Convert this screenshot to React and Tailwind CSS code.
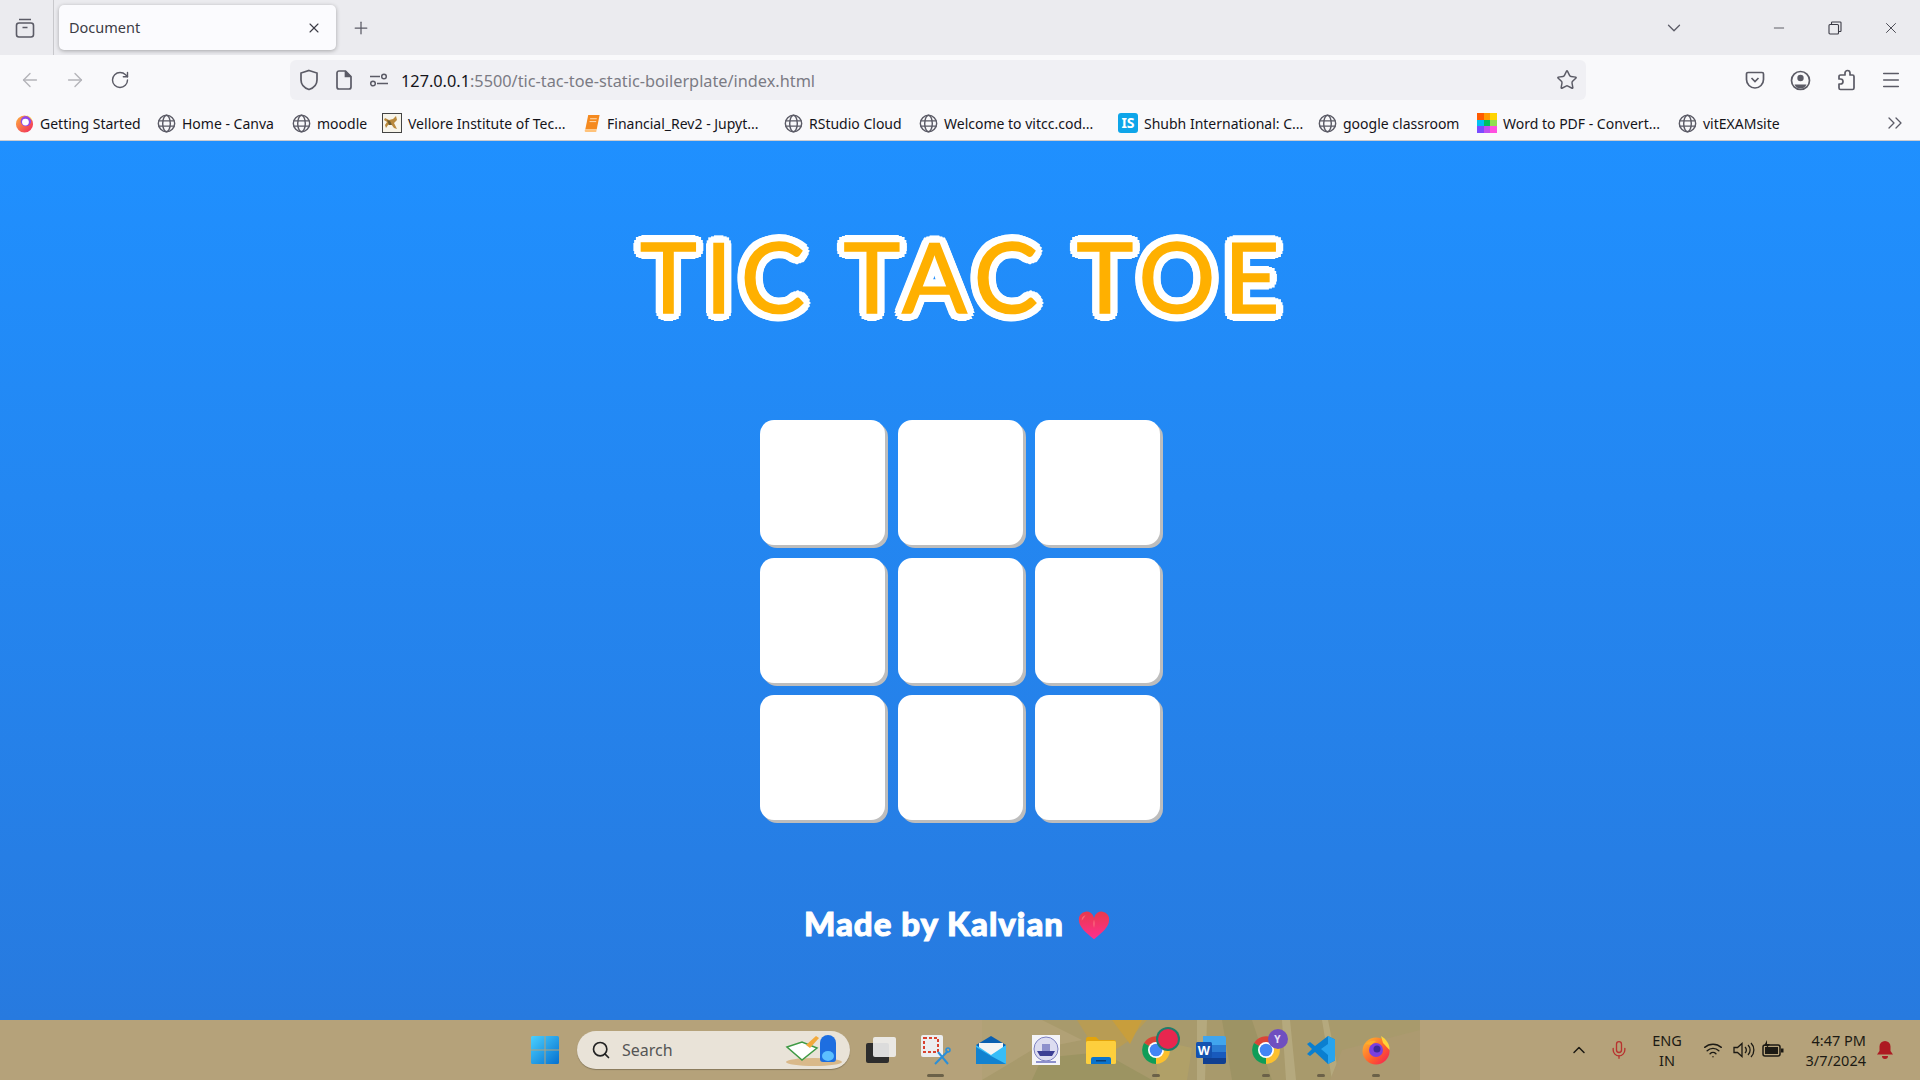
import { ArrowLeft, ArrowRight, RotateCw, X, Plus, ChevronDown, Minus, Star, Menu, ChevronsRight, ChevronUp, Mic, Wifi, Search } from 'lucide-react';

const Globe = () => (
  <svg width="19" height="19" viewBox="0 0 20 20" fill="none" stroke="#5b5b66" strokeWidth="1.5" className="shrink-0">
    <circle cx="10" cy="10" r="8.6" />
    <ellipse cx="10" cy="10" rx="4" ry="8.6" />
    <path d="M1.5 7.2h17M1.5 12.8h17" />
  </svg>
);

const FirefoxDot = () => (
  <svg width="19" height="19" viewBox="0 0 20 20" className="shrink-0">
    <defs>
      <linearGradient id="ffdot" x1="0" y1="0" x2="1" y2="1">
        <stop offset="0" stopColor="#ffb43a" />
        <stop offset="1" stopColor="#f0245f" />
      </linearGradient>
    </defs>
    <circle cx="10" cy="10.5" r="9" fill="url(#ffdot)" />
    <circle cx="11.5" cy="7.5" r="5.5" fill="#8f4ae8" />
    <circle cx="11" cy="8.5" r="3.6" fill="#fff" />
    <path d="M12 1.2c3 .6 5.6 3 6.5 6-2-2.8-4-4.2-6.5-6z" fill="#ffd23f" />
  </svg>
);

const TomcatIcon = () => (
  <svg width="20" height="20" viewBox="0 0 20 20" className="shrink-0">
    <rect x=".5" y=".5" width="19" height="19" fill="#f7f4ea" stroke="#444" />
    <path d="M3 5l4 2 4-1 3-3 1 4-3 3 3 6-3-1-3-4-3 1-2 3-1-3 2-3-3-2z" fill="#b9893c" />
    <path d="M5 7l3 1 2 4-3 0z" fill="#6d5a2c" />
  </svg>
);

const BookIcon = () => (
  <svg width="18" height="19" viewBox="0 0 18 20" className="shrink-0">
    <path d="M5 1h12l-3 15H2z" fill="#f58a1f" />
    <path d="M2 16h12l-.6 3H2.4C1 19 1 16.5 2 16z" fill="#ffc27a" />
    <path d="M7 5h7M6.4 8h7" stroke="#ffe0b8" strokeWidth="1" />
  </svg>
);

const IsIcon = () => (
  <span className="flex h-5 w-5 shrink-0 items-center justify-center rounded-[3px] bg-[#0ea5e9] text-[14px] font-bold leading-none text-white">IS</span>
);

const WordPdfIcon = () => (
  <div className="grid h-5 w-5 shrink-0 grid-cols-3 grid-rows-3">
    <span className="bg-[#ff5a00]" /><span className="bg-[#ff9a00]" /><span className="bg-[#ffd400]" />
    <span className="bg-[#00c0f0]" /><span className="bg-[#00c060]" /><span className="bg-[#90e050]" />
    <span className="bg-[#7a4cff]" /><span className="bg-[#c050f0]" /><span className="bg-[#ff50e0]" />
  </div>
);

const bookmarks = [
  { label: 'Getting Started', icon: <FirefoxDot />, width: 'w-[142px]' },
  { label: 'Home - Canva', icon: <Globe />, width: 'w-[135px]' },
  { label: 'moodle', icon: <Globe />, width: 'w-[90px]' },
  { label: 'Vellore Institute of Tec...', icon: <TomcatIcon />, width: 'w-[201px]' },
  { label: 'Financial_Rev2 - Jupyt...', icon: <BookIcon />, width: 'w-[201px]' },
  { label: 'RStudio Cloud', icon: <Globe />, width: 'w-[135px]' },
  { label: 'Welcome to vitcc.cod...', icon: <Globe />, width: 'w-[199px]' },
  { label: 'Shubh International: C...', icon: <IsIcon />, width: 'w-[200px]' },
  { label: 'google classroom', icon: <Globe />, width: 'w-[159px]' },
  { label: 'Word to PDF - Convert...', icon: <WordPdfIcon />, width: 'w-[201px]' },
  { label: 'vitEXAMsite', icon: <Globe />, width: 'w-[110px]' },
];

const TabStrip = () => (
  <div className="flex h-[55px] items-center bg-[#ebebef] text-[#5b5b66]">
    <div className="flex h-full w-[54px] items-center justify-center border-r border-[#c8c8cc] pr-[4px]">
      <svg width="22" height="22" viewBox="0 0 22 22" fill="none" stroke="#5b5b66" strokeWidth="1.6">
        <rect x="2.5" y="6" width="17" height="14" rx="2.5" />
        <path d="M5 2.5h12M8.5 10.5h5" />
      </svg>
    </div>
    <div className="ml-[5px] flex h-[45px] w-[277px] items-center justify-between rounded-[5px] bg-[#fbfbfe] pl-[10px] pr-[14px] shadow-[0_1px_4px_rgba(0,0,0,0.3)]">
      <span className="pt-[1px] text-[14.5px] text-[#3b3b45]">Document</span>
      <X size={16} strokeWidth={1.6} color="#3b3b45" />
    </div>
    <div className="ml-[15px]">
      <Plus size={20} strokeWidth={1.5} />
    </div>
    <div className="ml-auto flex items-center pr-[1px]">
      <ChevronDown size={22} strokeWidth={1.4} />
      <div className="ml-[66px] flex items-center text-[#3b3b45]">
        <span className="flex w-[56px] justify-center"><Minus size={16} strokeWidth={1.2} /></span>
        <span className="flex w-[56px] justify-center">
          <svg width="14" height="14" viewBox="0 0 14 14" fill="none" stroke="#3b3b45" strokeWidth="1.1">
            <rect x="1" y="3.5" width="9.5" height="9.5" rx="1" />
            <path d="M3.5 3.5V1.8A.8.8 0 0 1 4.3 1h7.9a.8.8 0 0 1 .8.8v7.9a.8.8 0 0 1-.8.8h-1.7" />
          </svg>
        </span>
        <span className="flex w-[56px] justify-center"><X size={18} strokeWidth={1.2} /></span>
      </div>
    </div>
  </div>
);

const Toolbar = () => (
  <div className="flex h-[50px] items-center bg-[#f9f9fb] text-[#5b5b66]">
    <div className="flex w-[290px] items-center pl-[7px]">
      <span className="flex w-[45px] justify-center text-[#b4b4b9]"><ArrowLeft size={22} strokeWidth={1.5} /></span>
      <span className="flex w-[45px] justify-center text-[#b4b4b9]"><ArrowRight size={22} strokeWidth={1.5} /></span>
      <span className="flex w-[45px] justify-center"><RotateCw size={20} strokeWidth={1.7} /></span>
    </div>
    <div className="flex h-[40px] w-[1296px] items-center rounded-[6px] bg-[#f0f0f4] pl-[9px] pr-[9px]">
      <svg width="20" height="22" viewBox="0 0 20 22" fill="none" stroke="#5b5b66" strokeWidth="1.7">
        <path d="M10 1.5l8 2.5v7c0 5-3.5 8-8 9.5-4.5-1.5-8-4.5-8-9.5V4z" />
      </svg>
      <svg width="16" height="20" viewBox="0 0 16 20" fill="none" stroke="#5b5b66" strokeWidth="1.7" className="ml-[17px]">
        <path d="M3 1h6.5L15 6.5V17a2 2 0 0 1-2 2H3a2 2 0 0 1-2-2V3a2 2 0 0 1 2-2z" />
        <path d="M9.5 1v5.5H15" fill="#5b5b66" />
      </svg>
      <svg width="20" height="16" viewBox="0 0 20 16" fill="none" stroke="#5b5b66" strokeWidth="1.5" className="ml-[17px]">
        <circle cx="15" cy="4.5" r="2.3" />
        <path d="M1 4.5h10" />
        <circle cx="4" cy="11.5" r="2.3" />
        <path d="M8 11.5h11" />
      </svg>
      <span className="ml-[12px] pt-[3px] text-[16.3px] text-[#15141a]">127.0.0.1<span className="text-[#7b7b84]">:5500/tic-tac-toe-static-boilerplate/index.html</span></span>
      <Star size={22} strokeWidth={1.6} className="ml-auto mr-[-1px]" />
    </div>
    <div className="ml-auto flex items-center pr-[18px]">
      <svg width="20" height="20" viewBox="0 0 20 20" fill="none" stroke="#5b5b66" strokeWidth="1.7" className="mr-[25px]">
        <path d="M3 2.5h14A1.5 1.5 0 0 1 18.5 4v5.5a8.5 8.5 0 0 1-17 0V4A1.5 1.5 0 0 1 3 2.5z" />
        <path d="M6.5 8l3.5 3.5L13.5 8" />
      </svg>
      <svg width="21" height="21" viewBox="0 0 21 21" fill="none" className="mr-[24px]">
        <circle cx="10.5" cy="10.5" r="9" stroke="#5b5b66" strokeWidth="1.7" />
        <circle cx="10.5" cy="8" r="3.2" fill="#5b5b66" />
        <path d="M4.5 14.5h12a6.5 6.500 0 0 1-12 0z" fill="#5b5b66" />
      </svg>
      <svg width="22" height="22" viewBox="0 0 22 22" fill="none" stroke="#5b5b66" strokeWidth="1.7" strokeLinejoin="round" className="mr-[23px]">
        <path d="M8 20.5H5.5A1.5 1.5 0 0 1 4 19v-4h1.5a2.5 2.5 0 0 0 0-5H4V7.5A1.5 1.5 0 0 1 5.5 6H10V4a2.5 2.5 0 0 1 5 0v2h2.5A1.5 1.5 0 0 1 19 7.5V19a1.5 1.5 0 0 1-1.5 1.5z" />
      </svg>
      <Menu size={22} strokeWidth={1.6} />
    </div>
  </div>
);

const BookmarksBar = () => (
  <div className="flex h-[36px] items-center border-b border-[#ccccd0] bg-[#f9f9fb] pl-[15px] pt-[1px]">
    {bookmarks.map((b) => (
      <div key={b.label} className={`flex items-center gap-[6px] ${b.width}`}>
        {b.icon}
        <span className="whitespace-nowrap text-[14px] text-[#15141a]">{b.label}</span>
      </div>
    ))}
    <ChevronsRight size={24} strokeWidth={1.3} color="#5b5b66" className="ml-auto mr-[13px]" />
  </div>
);

const Game = () => (
  <main className="flex flex-1 flex-col items-center bg-gradient-to-b from-[#1f90ff] to-[#277adf]">
    <h1 className="mt-[85px] h-[100px] whitespace-nowrap pl-[8px] font-['Lato',sans-serif] text-[96px] font-normal leading-[100px] tracking-[8.5px] text-[#ffb000] [-webkit-text-stroke:1.5px_#ffb000] [text-shadow:8px_0_#fff,7.4px_3.1px_#fff,5.7px_5.7px_#fff,3.1px_7.4px_#fff,0_8px_#fff,-3.1px_7.4px_#fff,-5.7px_5.7px_#fff,-7.4px_3.1px_#fff,-8px_0_#fff,-7.4px_-3.1px_#fff,-5.7px_-5.7px_#fff,-3.1px_-7.4px_#fff,0_-8px_#fff,3.1px_-7.4px_#fff,5.7px_-5.7px_#fff,7.4px_-3.1px_#fff]">
      TIC TAC TOE
    </h1>
    <div className="mt-[94px] grid grid-cols-[repeat(3,125px)] grid-rows-[repeat(3,125px)] gap-[12.5px]">
      {Array.from({ length: 9 }).map((_, i) => (
        <div key={i} className="rounded-[14px] bg-white shadow-[3px_3px_0_#bdbdbd]" />
      ))}
    </div>
    <footer className="mr-[6px] mt-[84px] flex h-[40px] items-center gap-[14px] font-['Lato',sans-serif] text-[33px] font-black tracking-[1px] text-white [-webkit-text-stroke:1px_#fff]">
      Made by Kalvian
      <svg width="32" height="30" viewBox="0 0 34 30" className="mt-[4px]">
        <defs>
          <linearGradient id="heart" x1="0" y1="0" x2="0" y2="1">
            <stop offset="0" stopColor="#e83a4c" />
            <stop offset="1" stopColor="#ff2f8e" />
          </linearGradient>
        </defs>
        <path d="M17 29C8 22 1 16 1 9a8 8 0 0 1 16-2.5A8 8 0 0 1 33 9c0 7-7 13-16 20z" fill="url(#heart)" />
        <path d="M8 3.5c-3 .5-4.5 3-4 6 1.5-2.5 3-4 4-6zM17 8c-1 3-1 6 0 9 1-3 1-6 0-9z" fill="#ff8a8a" opacity=".6" />
      </svg>
    </footer>
  </main>
);

const WindowsLogo = () => (
  <svg width="30" height="30" viewBox="0 0 30 30">
    <defs>
      <linearGradient id="win" x1="0" y1="0" x2="1" y2="1">
        <stop offset="0" stopColor="#4ad0ff" />
        <stop offset="1" stopColor="#0570cf" />
      </linearGradient>
    </defs>
    <path d="M1 2.5A1.5 1.5 0 0 1 2.5 1h12v13.5H1zM15.5 1h12A1.5 1.5 0 0 1 29 2.5v12H15.5zM1 15.5h13.5V29h-12A1.5 1.5 0 0 1 1 27.5zM15.5 15.5H29v12a1.5 1.5 0 0 1-1.5 1.5h-12z" fill="url(#win)" />
  </svg>
);

const Chrome = ({ badge, badgeText }) => (
  <div className="relative h-[30px] w-[30px]">
    <svg width="30" height="30" viewBox="0 0 30 30">
      <path d="M15 15L3 8A14 14 0 0 1 27 8z" fill="#db4437" />
      <path d="M15 15L27 8A14 14 0 0 1 15 29z" fill="#fbc02d" />
      <path d="M15 15L15 29A14 14 0 0 1 3 8z" fill="#0f9d58" />
      <circle cx="15" cy="15" r="8" fill="#fff" />
      <circle cx="15" cy="15" r="6.3" fill="#4285f4" />
    </svg>
    <span className={`absolute -right-[7px] -top-[6px] flex h-[20px] w-[20px] items-center justify-center rounded-full text-[10px] font-bold text-[#e8e0f8] ${badge}`}>{badgeText}</span>
  </div>
);

const MailIcon = () => (
  <svg width="32" height="30" viewBox="0 0 32 30">
    <path d="M16 1L31 10v4H1v-4z" fill="#0a5fb0" />
    <path d="M4 8h24v8l-12 6-12-6z" fill="#f4f4f4" />
    <path d="M1 10l15 10 15-10v19H1z" fill="#38bdf8" />
    <path d="M1 29V12l15 9 15 8z" fill="#1282d0" />
  </svg>
);

const VitLogo = () => (
  <svg width="28" height="30" viewBox="0 0 28 30">
    <rect width="28" height="30" fill="#f4f4f8" />
    <circle cx="14" cy="14" r="12" fill="#dcdcf0" stroke="#7d80c0" />
    <path d="M5 16h18l-3 5H8z" fill="#3c3f94" />
    <path d="M10 16V9h8v7z" fill="#8d90cc" />
    <rect x="4" y="26" width="20" height="2" fill="#8d90cc" />
  </svg>
);

const FolderIcon = () => (
  <svg width="30" height="28" viewBox="0 0 30 28">
    <path d="M0 3a2 2 0 0 1 2-2h8l3 3h15a2 2 0 0 1 2 2v4H0z" fill="#e3a40b" />
    <rect y="5" width="30" height="23" rx="1.5" fill="#fdcf3d" />
    <path d="M5 28v-5a2 2 0 0 1 2-2h16a2 2 0 0 1 2 2v5z" fill="#0a74cd" />
    <rect x="10" y="24" width="10" height="1.5" fill="#0d3f75" />
  </svg>
);

const WordIcon = () => (
  <svg width="30" height="30" viewBox="0 0 30 30">
    <path d="M7 1h21a2 2 0 0 1 2 2v7H7z" fill="#41a5ee" />
    <rect x="7" y="10" width="23" height="7" fill="#2b7cd3" />
    <rect x="7" y="17" width="23" height="6" fill="#185abd" />
    <path d="M7 23h23v4a2 2 0 0 1-2 2H7z" fill="#103f91" />
    <rect y="7" width="16" height="16" rx="1.5" fill="#1452b0" />
    <text x="8" y="20" textAnchor="middle" fontFamily="Liberation Sans" fontWeight="700" fontSize="13" fill="#fff">W</text>
  </svg>
);

const VsCode = () => (
  <svg width="30" height="30" viewBox="0 0 30 30">
    <path d="M22 1l7 3.5v21L22 29 9 17l-5 4-3-2 5-5-5-5 3-2 5 4z" fill="#0a7fd0" />
    <path d="M22 1l7 3.5v21L22 29V20l-7-6 7-5z" fill="#28a4ee" />
  </svg>
);

const Firefox = () => (
  <svg width="30" height="30" viewBox="0 0 30 30">
    <defs>
      <linearGradient id="ff" x1="0" y1="0" x2="1" y2="1">
        <stop offset="0" stopColor="#ffc12e" />
        <stop offset=".6" stopColor="#ff5a2d" />
        <stop offset="1" stopColor="#f0185c" />
      </linearGradient>
    </defs>
    <circle cx="15" cy="16" r="13.5" fill="url(#ff)" />
    <path d="M20 1c5 3 9 8 8.5 14L22 8z" fill="#ffd43a" />
    <circle cx="15" cy="15" r="7" fill="#7b3fe0" />
    <circle cx="16" cy="14" r="3.5" fill="#3d2a9c" />
    <path d="M4 9c3-3 7-4 11-3l-5 4z" fill="#ffae2b" />
  </svg>
);

const TaskIcon = ({ children, running }) => (
  <div className="relative flex h-[60px] w-[55px] items-center justify-center">
    {children}
    {running && <span className={`absolute bottom-[3px] h-[3px] rounded-full bg-[#6b6148] ${running}`} />}
  </div>
);

const Wallpaper = () => (
  <svg className="absolute left-[982px] top-0 h-[60px] w-[438px]" viewBox="0 0 438 60" preserveAspectRatio="none">
    <rect width="438" height="60" fill="#a89a6c" />
    <path d="M0 0h60l40 20-50 10L0 60z" fill="#b1a176" />
    <path d="M95 0h70l-20 22-15 10-20-8z" fill="#b89c54" />
    <path d="M130 0h30l-12 24z" fill="#c89e3c" />
    <path d="M215 0h10l-2 60h-8zM300 0h8l6 60h-10zM340 0h6l12 60h-8z" fill="#b5a97e" />
    <path d="M240 0h30l20 60h-40z" fill="#9d9364" />
    <path d="M360 30l78-20v50h-90z" fill="#ac9a70" />
    <path d="M60 38l60-6 50 28H50z" fill="#9c9462" />
    <path d="M175 20l35 8-5 32h-30z" fill="#b0a068" />
  </svg>
);

const Taskbar = () => (
  <div className="relative flex h-[60px] items-center overflow-hidden bg-[#b5a27a] font-['Noto_Sans',sans-serif]">
    <Wallpaper />
    <div className="relative flex w-full items-center">
      <div className="ml-[530px] flex w-[47px]"><WindowsLogo /></div>
      <div className="flex h-[38px] w-[273px] items-center rounded-full bg-[#e9e3d8] pl-[14px] pr-[6px] shadow-[0_1px_1px_rgba(0,0,0,0.25)]">
        <Search size={20} strokeWidth={2} color="#222" />
        <span className="ml-[11px] text-[16px] text-[#555]">Search</span>
        <svg width="60" height="34" viewBox="0 0 60 34" className="ml-auto">
          <ellipse cx="30" cy="29" rx="28" ry="4" fill="#d9b98a" />
          <path d="M3 14l15-5 15 6-15 12z" fill="#fff" stroke="#3f9a45" strokeWidth="1.5" />
          <path d="M22 12l10-9 3 2-9 10z" fill="#f2a93b" />
          <path d="M36 10a8 8 0 0 1 16 0v16a3 3 0 0 1-3 3H39a3 3 0 0 1-3-3z" fill="#1d6ee0" />
          <ellipse cx="44" cy="23" rx="6" ry="5" fill="#5cc0ff" />
        </svg>
      </div>
      <div className="ml-[3px] flex items-center">
        <TaskIcon>
          <div className="relative h-[26px] w-[30px]">
            <span className="absolute bottom-0 left-0 h-[20px] w-[23px] rounded-[2px] bg-[#2d2d2d]" />
            <span className="absolute right-0 top-0 h-[20px] w-[23px] rounded-[2px] bg-[#f0f0f0]/90" />
          </div>
        </TaskIcon>
        <TaskIcon running="w-[17px]">
          <svg width="32" height="32" viewBox="0 0 32 32">
            <rect x="1" y="1" width="22" height="22" rx="2" fill="#eceef0" />
            <rect x="4" y="4" width="14" height="14" fill="none" stroke="#d9432f" strokeWidth="2" strokeDasharray="3 2" />
            <path d="M18 18l10 12M28 17L15 30" stroke="#2a8fd8" strokeWidth="2" />
            <circle cx="28" cy="16" r="2" fill="none" stroke="#2a8fd8" strokeWidth="1.5" />
          </svg>
        </TaskIcon>
        <TaskIcon><MailIcon /></TaskIcon>
        <TaskIcon><VitLogo /></TaskIcon>
        <TaskIcon><FolderIcon /></TaskIcon>
        <TaskIcon running="w-[8px]"><Chrome badge="bg-[#e8264f] ring-[2px] ring-[#1f7c6b]" badgeText="" /></TaskIcon>
        <TaskIcon><WordIcon /></TaskIcon>
        <TaskIcon running="w-[8px]"><Chrome badge="bg-[#6f4fc0]" badgeText="Y" /></TaskIcon>
        <TaskIcon running="w-[8px]"><VsCode /></TaskIcon>
        <TaskIcon running="w-[8px]"><Firefox /></TaskIcon>
      </div>
      <div className="ml-auto flex items-center pr-[26px] text-[#1c1a14]">
        <ChevronUp size={20} strokeWidth={1.8} />
        <Mic size={20} strokeWidth={1.6} color="#b8322f" className="ml-[20px]" />
        <div className="ml-[13px] flex w-[50px] flex-col items-center text-[14.5px] leading-[20px]">
          <span>ENG</span>
          <span>IN</span>
        </div>
        <Wifi size={20} strokeWidth={1.7} className="ml-[11px]" />
        <svg width="22" height="20" viewBox="0 0 22 20" fill="none" stroke="#1c1a14" strokeWidth="1.3" className="ml-[10px]">
          <path d="M1 7.5h3.5L9 3.5v13l-4.5-4H1z" />
          <path d="M12 7a4 4 0 0 1 0 6M15 5a7 7 0 0 1 0 10M18 3a10 10 0 0 1 0 14" />
        </svg>
        <svg width="22" height="20" viewBox="0 0 22 20" className="ml-[7px]">
          <rect x="1" y="5" width="17" height="11" rx="2" fill="none" stroke="#1c1a14" strokeWidth="1.5" />
          <rect x="3" y="7" width="13" height="7" fill="#1c1a14" />
          <rect x="19" y="8.5" width="2.5" height="4" fill="#1c1a14" />
          <path d="M5 0L2 6h3L4 9l4-5H5z" fill="#1c1a14" />
        </svg>
        <div className="ml-[14px] flex w-[68px] flex-col items-end text-[14.5px] leading-[20px]">
          <span>4:47 PM</span>
          <span>3/7/2024</span>
        </div>
        <svg width="18" height="20" viewBox="0 0 18 20" className="ml-[10px]">
          <path d="M9 1a5.5 5.5 0 0 1 5.5 5.5V11l2.5 3.5H1L3.5 11V6.5A5.5 5.5 0 0 1 9 1z" fill="#ad1a22" />
          <path d="M6 16h6a3 3 0 0 1-6 0z" fill="#ad1a22" />
        </svg>
      </div>
    </div>
  </div>
);

const App = () => {
  return (
    <div className="flex h-[1080px] w-[1920px] flex-col overflow-hidden font-['Noto_Sans',sans-serif]">
      <TabStrip />
      <Toolbar />
      <BookmarksBar />
      <Game />
      <Taskbar />
    </div>
  );
};

export default App;
